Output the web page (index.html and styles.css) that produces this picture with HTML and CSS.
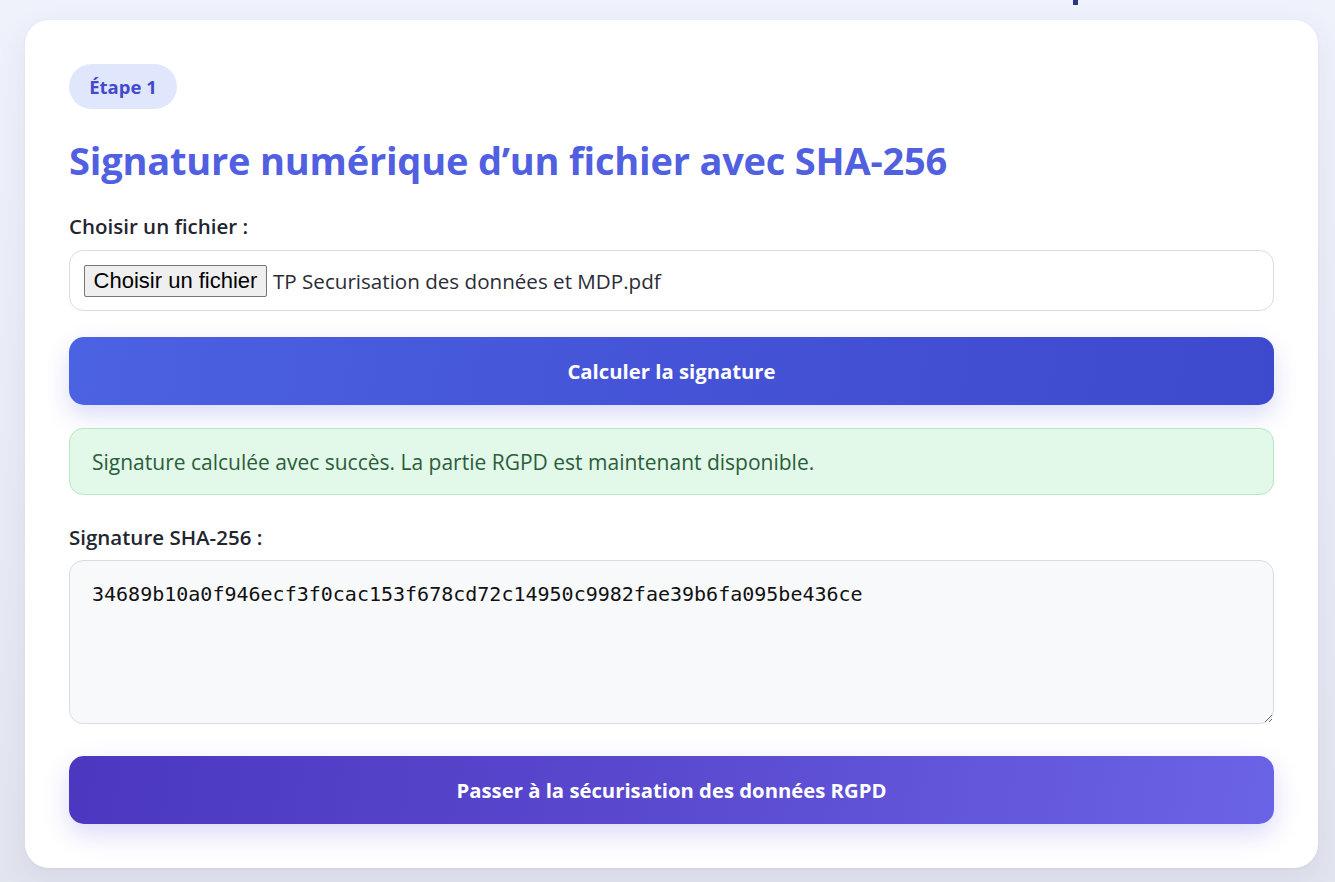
FILE: index.html
```html
<!DOCTYPE html>
<html lang="fr">
<head>
<meta charset="utf-8">
<title>Signature numérique</title>
<link rel="stylesheet" href="styles.css">
</head>
<body>
<div class="top-mark"></div>
<main class="card">
  <span class="badge">Étape 1</span>
  <h1 class="title">Signature numérique d’un fichier avec SHA-256</h1>

  <label class="label label-file">Choisir un fichier :</label>
  <div class="file-box">
    <button class="file-btn" type="button">Choisir un fichier</button>
    <span class="file-name">TP Securisation des données et MDP.pdf</span>
  </div>

  <button class="btn btn-primary" type="button">Calculer la signature</button>

  <div class="alert">Signature calculée avec succès. La partie RGPD est maintenant disponible.</div>

  <label class="label label-hash">Signature SHA-256 :</label>
  <textarea class="hash" readonly>34689b10a0f946ecf3f0cac153f678cd72c14950c9982fae39b6fa095be436ce</textarea>

  <button class="btn btn-secondary" type="button">Passer à la sécurisation des données RGPD</button>
</main>
</body>
</html>
```

FILE: styles.css
```css
* { box-sizing: border-box; }

html, body {
  margin: 0;
  padding: 0;
}

body {
  min-height: 882px;
  background: linear-gradient(180deg, #eff1fb 0%, #e8eaf5 60%, #e2e4ee 100%);
  font-family: "Open Sans", "Noto Sans", sans-serif;
  color: #222433;
  padding: 0 17px 0 25px;
}

.top-mark {
  width: 5px;
  height: 5px;
  margin-left: 1048px;
  background: #2b3689;
}

.card {
  margin-top: 15px;
  background: #ffffff;
  border-radius: 24px;
  padding: 44px 44px 44px;
  box-shadow: 0 10px 30px rgba(60, 70, 140, 0.08), 0 1px 3px rgba(60, 70, 140, 0.05);
  display: flex;
  flex-direction: column;
  align-items: stretch;
}

.badge {
  align-self: flex-start;
  height: 45px;
  width: 108px;
  border-radius: 23px;
  background: #e0e7fd;
  color: #4549cc;
  font-weight: 700;
  font-size: 18.5px;
  display: flex;
  align-items: center;
  justify-content: center;
}

.title {
  margin: 30px 0 0;
  font-size: 38px;
  line-height: 43px;
  font-weight: 700;
  color: #5060e0;
  letter-spacing: -0.2px;
}

.label {
  display: block;
  font-size: 20.5px;
  font-weight: 600;
  line-height: 26px;
  color: #23252f;
}

.label-file { margin-top: 31px; }
.label-hash { margin-top: 29px; }

.file-box {
  margin-top: 11px;
  height: 61px;
  border: 1px solid #d9dce6;
  border-radius: 14px;
  padding: 0 14px;
  display: flex;
  align-items: center;
  background: #fff;
}

.file-btn {
  font-family: "Liberation Sans", Arial, sans-serif;
  font-size: 22px;
  color: #000;
  height: 32px;
  width: 183px;
  padding: 0;
  background: #efefef;
  border: 1px solid #767676;
  border-radius: 2px;
  margin: 0;
}

.file-name {
  margin-left: 6px;
  font-size: 20.6px;
  color: #2a2c36;
}

.btn {
  height: 68px;
  border: none;
  border-radius: 15px;
  color: #fff;
  font-family: "Open Sans", "Noto Sans", sans-serif;
  font-size: 20.3px;
  font-weight: 700;
  width: 100%;
}

.btn-primary {
  margin-top: 26px;
  background: linear-gradient(100deg, #4b62e2 0%, #4452d6 55%, #3e4acd 100%);
  box-shadow: 0 10px 24px rgba(80, 90, 220, 0.22);
}

.btn-secondary {
  margin-top: 32px;
  background: linear-gradient(100deg, #4b37c0 0%, #5a4ad0 50%, #6b63e6 100%);
  box-shadow: 0 10px 26px rgba(90, 80, 220, 0.22);
}

.alert {
  margin-top: 23px;
  height: 67px;
  border: 1px solid #b6e8c4;
  border-radius: 14px;
  background: #e2f8e9;
  color: #2b5d3a;
  font-size: 21px;
  font-weight: 500;
  padding: 0 22px;
  display: flex;
  align-items: center;
}

.hash {
  margin-top: 10px;
  height: 164px;
  width: 100%;
  border: 1px solid #d9dce6;
  border-radius: 14px;
  background: #f8f9fb;
  font-family: "DejaVu Sans Mono", "Liberation Mono", monospace;
  font-size: 20px;
  line-height: 26px;
  color: #111;
  padding: 20px 22px;
  resize: vertical;
  outline: none;
}
```
